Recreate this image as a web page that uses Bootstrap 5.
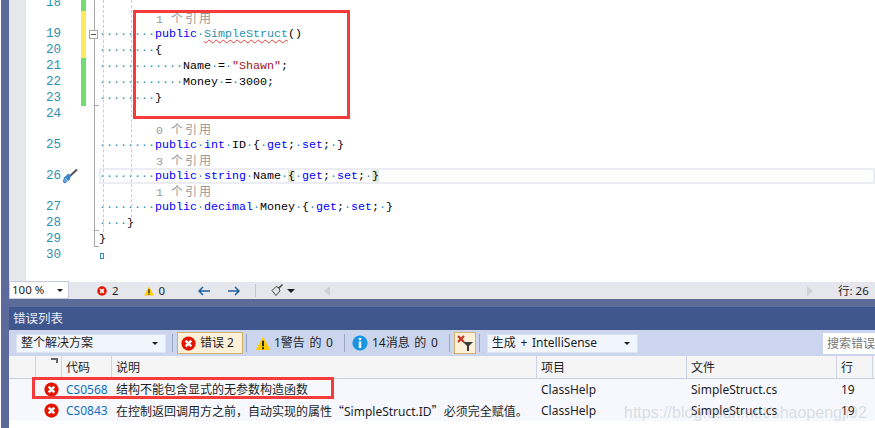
<!DOCTYPE html>
<html lang="zh-Hans">
<head>
<meta charset="utf-8">
<title>错误列表</title>
<link href="https://cdn.jsdelivr.net/npm/bootstrap@5.3.0/dist/css/bootstrap.min.css" rel="stylesheet">
<style>
html,body{margin:0;height:428px;overflow:hidden;background:#fff}
body{font-family:"Noto Sans","Noto Sans CJK SC",sans-serif;font-size:12px;color:#1e1e1e}
.shell{position:relative;width:875px;height:428px;overflow:hidden;padding-left:9px;background:#fff}
.shell::before{content:"";position:absolute;left:1px;top:0;bottom:0;width:8px;background:#5b6a9b}
.editor{position:relative;height:282px;overflow:hidden;background:linear-gradient(90deg,#e6e7e8 0,#e6e7e8 17px,#fff 17px)}
.codelines{margin-top:-5px;font-family:"Liberation Mono","Noto Sans CJK SC",monospace;font-size:11.67px;color:#000}
.ln{display:flex;height:16px;line-height:16px;white-space:pre}
.ln.lens{height:15px;line-height:14px;color:#999}
.num{width:52px;text-align:right;color:#2b91af;font-size:12.5px}
.bar{width:5px;margin-left:20px;flex:none}
.bar.g{background:#6fdc74}.bar.y{background:#fee95f}
.code{margin-left:13px;flex:1}
.lens .code{padding-left:1px}
.ws{color:#2b91af}
.kw{color:#00f}.ty{color:#2b91af}.str{color:#a31515}
.cjk{font-family:"Noto Sans CJK SC",sans-serif;font-size:12px;letter-spacing:2px;margin-left:1px;color:#999}
.squig{text-decoration:underline wavy #f03a3a 1px;text-underline-offset:2px}
.brk{background:#e2e6d6}
.caretline{position:relative}
.caretline::after{content:"";position:absolute;left:90px;right:0;top:0;bottom:0;border:2px solid #ecedf4;pointer-events:none}
.brushico{position:absolute;left:53px;top:0}
.foldline{position:absolute;left:85px;top:0;width:1px;height:246px;background:#a9a9a9}
.tick{position:absolute;left:85px;width:5px;height:1px;background:#a9a9a9}
.t1{top:105px}.t2{top:230px}.t3{top:246px}
.foldbox{position:absolute;left:80px;top:30px;width:9px;height:9px;border:1px solid #a5a5a5;background:#fff}
.foldbox::after{content:"";position:absolute;left:1px;right:1px;top:3px;height:1px;background:#555}
.guide{position:absolute;top:0;width:0;border-left:1px dashed #ccc}
.gd1{left:94px;height:232px}.gd2{left:122px;height:222px}
.endmark{position:absolute;left:91px;top:253px;width:4px;height:6px;border:1px solid #2b91af}
.redbox{position:absolute;border:3px solid #f73a3a;pointer-events:none}
.rb1{left:133px;top:10px;width:217px;height:109px}
.rb2{left:32px;top:377px;width:302px;height:22px}
.statusbar{height:17px;background:#e6e7ec;display:flex;align-items:center;font-size:11.5px;position:relative}
.zoomsel{width:60px;height:18px;margin-top:-1px;background:#fff;border:1px solid #c3cbdc;display:flex;align-items:center;justify-content:space-between;padding:0 5px 0 2px}
.caretdn{width:0;height:0;border-left:3px solid transparent;border-right:3px solid transparent;border-top:3px solid #1e1e1e;flex:none}
.s1{margin-left:28px}.s2{margin-left:5px}.s3{margin-left:25px}.s4{margin-left:33px}.s5{margin-left:18px}
.vsep{width:1px;height:13px;background:#c4c4cc;margin-left:15px}
.s6{margin-left:15px}.s7{margin-left:4px;border-left-width:4px;border-right-width:4px;border-top-width:4px}
.trl{margin-left:29px;width:0;height:0;border-top:5px solid transparent;border-bottom:5px solid transparent;border-right:6px solid #d0d0d6}
.trr{margin-left:477px;width:0;height:0;border-top:5px solid transparent;border-bottom:5px solid transparent;border-left:6px solid #d0d0d6}
.rowpos{margin-left:auto;padding:0 7px 0 0;width:37px;white-space:nowrap}
.bluebar{height:8px;background:#5d6b98}
.titlebar{height:23px;background:#3f578c;color:#e8ecf6;font-size:12.5px;line-height:23px;padding-left:4px}
.toolbar{height:26px;background:#cbd5ee;display:flex;align-items:center;padding-left:7px;white-space:nowrap;word-spacing:1.5px}
.combo{height:19px;background:#f1f5fd;border:1px solid #dce3f3;display:flex;align-items:center;justify-content:space-between;padding:0 7px 0 4px}
.w1{width:150px}.w2{width:151px;margin-left:7px}
.tsep{width:1px;height:18px;background:#98a6c4;flex:none}
.sp1{margin:0 4px 0 6px}.sp2{margin:0 0 0 3px}.sp3{margin:0 0 0 11px}.sp4{margin:0 4px 0 11px}.sp5{margin:0 0 0 3px}
.btn.errbtn{--bs-btn-padding-x:0;--bs-btn-padding-y:0;--bs-btn-border-radius:0;--bs-btn-font-size:12px;height:22px;width:66px;background:#fdf0d8;border:1px solid #d6b06c;display:flex;align-items:center;gap:4px;padding-left:3px;color:#1e1e1e}
.btn.filtbtn{--bs-btn-padding-x:0;--bs-btn-padding-y:0;--bs-btn-border-radius:0;height:22px;width:22px;background:#fdf0d8;border:1px solid #d6b06c;display:flex;align-items:center;justify-content:center}
.tbw{display:flex;align-items:center;gap:3px;margin-left:8px}
.tbi{display:flex;align-items:center;gap:4px;margin-left:7px}
.searchbox{margin-left:auto;width:52px;height:21px;background:#fff;color:#777;line-height:21px;padding-left:4px;overflow:hidden}
.errtable{table-layout:fixed;width:866px;margin:0;font-size:12px;--bs-table-bg:transparent;border-collapse:separate;border-spacing:0}
.errtable th,.errtable td{padding:0 0 0 4px;border:0;font-weight:400;white-space:nowrap;overflow:hidden;vertical-align:middle;color:#1e1e1e}
.errtable thead th{height:23px;padding-top:1px;background:#f5f5f5;border-right:1px solid #cdd3e4;border-bottom:1px solid #c9cfe4}
.errtable tbody td{height:21px;padding-top:1px;background:#f6f8fe}
.errtable td.codelink{color:#0e70c0}
.errtable .ico{padding:0 3px 0 0}
.errtable .hdsort{position:relative}
.sorter{position:absolute;right:3px;top:2px}
.cq{font-family:"Noto Sans CJK SC",sans-serif}
.wm{position:absolute;left:624px;top:401px;font-family:"Liberation Sans",sans-serif;font-size:16px;color:rgba(170,170,175,.36);white-space:nowrap;pointer-events:none}
</style>
</head>
<body>
<svg width="0" height="0" class="position-absolute">
  <symbol id="err" viewBox="0 0 16 16"><circle cx="8" cy="8" r="7.6" fill="#e51400"/><path d="M5 5l6 6M11 5l-6 6" stroke="#fff" stroke-width="2.6"/></symbol>
  <symbol id="warn" viewBox="0 0 16 16"><path d="M8 .8L15.8 15H.2z" fill="#fc0"/><path d="M8 5v6M8 12v2" stroke="#1e1e1e" stroke-width="2"/></symbol>
  <symbol id="info" viewBox="0 0 16 16"><circle cx="8" cy="8" r="7.6" fill="#1a94e0"/><path d="M8 3v2.2M8 6.5V13" stroke="#fff" stroke-width="2.4"/></symbol>
  <symbol id="brush" viewBox="0 0 16 16"><path d="M15 1.5L8 8" stroke="#555" stroke-width="2"/><path d="M9 8L6.500 5.500 2 9.500 .8 14 3 15.500 7.500 12z" fill="#3a86c8"/><path d="M3 10l3 3M2.500 12l2 2" stroke="#d5e8f8" stroke-width=".9"/></symbol>
</svg>
<div class="shell">
  <div class="editor">
    <div class="codelines">
      <div class="ln"><div class="num">18</div><div class="bar g"></div><div class="code"></div></div>
      <div class="ln lens"><div class="num"></div><div class="bar y"></div><div class="code">        1 <span class="cjk">个引用</span></div></div>
      <div class="ln"><div class="num">19</div><div class="bar y"></div><div class="code"><span class="ws">········</span><span class="kw">public</span><span class="ws">·</span><span class="ty squig">SimpleStruct</span>()</div></div>
      <div class="ln"><div class="num">20</div><div class="bar y"></div><div class="code"><span class="ws">········</span>{</div></div>
      <div class="ln"><div class="num">21</div><div class="bar g"></div><div class="code"><span class="ws">············</span>Name<span class="ws">·</span>=<span class="ws">·</span><span class="str">"Shawn"</span>;</div></div>
      <div class="ln"><div class="num">22</div><div class="bar g"></div><div class="code"><span class="ws">············</span>Money<span class="ws">·</span>=<span class="ws">·</span>3000;</div></div>
      <div class="ln"><div class="num">23</div><div class="bar g"></div><div class="code"><span class="ws">········</span>}</div></div>
      <div class="ln"><div class="num">24</div><div class="bar"></div><div class="code"></div></div>
      <div class="ln lens"><div class="num"></div><div class="bar"></div><div class="code">        0 <span class="cjk">个引用</span></div></div>
      <div class="ln"><div class="num">25</div><div class="bar"></div><div class="code"><span class="ws">········</span><span class="kw">public</span><span class="ws">·</span><span class="kw">int</span><span class="ws">·</span>ID<span class="ws">·</span>{<span class="ws">·</span><span class="kw">get</span>;<span class="ws">·</span><span class="kw">set</span>;<span class="ws">·</span>}</div></div>
      <div class="ln lens"><div class="num"></div><div class="bar"></div><div class="code">        3 <span class="cjk">个引用</span></div></div>
      <div class="ln caretline"><div class="num">26</div><svg class="brushico" width="16" height="16"><use href="#brush"/></svg><div class="bar"></div><div class="code"><span class="ws">········</span><span class="kw">public</span><span class="ws">·</span><span class="kw">string</span><span class="ws">·</span>Name<span class="ws">·</span><span class="brk">{</span><span class="ws">·</span><span class="kw">get</span>;<span class="ws">·</span><span class="kw">set</span>;<span class="ws">·</span><span class="brk">}</span></div></div>
      <div class="ln lens"><div class="num"></div><div class="bar"></div><div class="code">        1 <span class="cjk">个引用</span></div></div>
      <div class="ln"><div class="num">27</div><div class="bar"></div><div class="code"><span class="ws">········</span><span class="kw">public</span><span class="ws">·</span><span class="kw">decimal</span><span class="ws">·</span>Money<span class="ws">·</span>{<span class="ws">·</span><span class="kw">get</span>;<span class="ws">·</span><span class="kw">set</span>;<span class="ws">·</span>}</div></div>
      <div class="ln"><div class="num">28</div><div class="bar"></div><div class="code"><span class="ws">····</span>}</div></div>
      <div class="ln"><div class="num">29</div><div class="bar"></div><div class="code">}</div></div>
      <div class="ln"><div class="num">30</div><div class="bar"></div><div class="code"></div></div>
    </div>
    <div class="foldline"></div>
    <div class="tick t1"></div>
    <div class="tick t2"></div>
    <div class="tick t3"></div>
    <div class="foldbox"></div>
    <div class="guide gd1"></div>
    <div class="guide gd2"></div>
    <div class="endmark"></div>
  </div>
  <div class="statusbar">
    <div class="zoomsel"><span>100 %</span><i class="caretdn"></i></div>
    <svg class="s1" width="10" height="10"><use href="#err"/></svg><span class="s2">2</span>
    <svg class="s3" width="10" height="10"><use href="#warn"/></svg><span class="s2">0</span>
    <svg class="s4" width="12" height="10" viewBox="0 0 12 10"><path d="M12 5H1M5 1L1 5l4 4" fill="none" stroke="#1c5f9f" stroke-width="1.5"/></svg>
    <svg class="s5" width="12" height="10" viewBox="0 0 12 10"><path d="M0 5h11M7 1l4 4-4 4" fill="none" stroke="#1c5f9f" stroke-width="1.5"/></svg>
    <div class="vsep"></div>
    <svg class="s6" width="12" height="13" viewBox="0 0 12 13"><path d="M11.500 .5L7.500 4.500" stroke="#444" stroke-width="1.500"/><path d="M8 4L5 2.500 1 6.500 5 11.500 9 7z" fill="#e4e4e8" stroke="#444"/></svg>
    <i class="caretdn s7"></i>
    <i class="trl"></i>
    <i class="trr"></i>
    <div class="rowpos">行: 26</div>
  </div>
  <div class="bluebar"></div>
  <div class="titlebar">错误列表</div>
  <div class="toolbar">
    <div class="combo w1"><span>整个解决方案</span><i class="caretdn"></i></div>
    <div class="tsep sp1"></div>
    <button type="button" class="btn errbtn"><svg width="15" height="15"><use href="#err"/></svg><span>错误 2</span></button>
    <div class="tsep sp2"></div>
    <div class="tbw"><svg width="16" height="15"><use href="#warn"/></svg><span>1警告 的 0</span></div>
    <div class="tsep sp3"></div>
    <div class="tbi"><svg width="16" height="16"><use href="#info"/></svg><span>14消息 的 0</span></div>
    <div class="tsep sp4"></div>
    <button type="button" class="btn filtbtn"><svg width="18" height="18" viewBox="0 0 18 18"><path d="M2 2l6 6M8 2L2 8" stroke="#c4341c" stroke-width="2.200"/><path d="M7 8h10l-4 4v5h-2v-5z" fill="#3c3c3c"/></svg></button>
    <div class="tsep sp5"></div>
    <div class="combo w2"><span>生成 + IntelliSense</span><i class="caretdn"></i></div>
    <div class="searchbox">搜索错误列表</div>
  </div>
  <table class="table errtable">
    <colgroup><col style="width:27px"><col style="width:26px"><col style="width:50px"><col style="width:425px"><col style="width:150px"><col style="width:150px"><col style="width:36px"><col></colgroup>
    <thead><tr><th></th><th class="hdsort"><svg class="sorter" width="7" height="5" viewBox="0 0 7 5"><path d="M0 0h7v5h-2V2H0z" fill="#666"/></svg></th><th>代码</th><th>说明</th><th>项目</th><th>文件</th><th>行</th><th class="border-end-0"></th></tr></thead>
    <tbody>
      <tr><td></td><td class="ico"><svg width="15" height="15" class="d-block ms-auto"><use href="#err"/></svg></td><td class="codelink">CS0568</td><td>结构不能包含显式的无参数构造函数</td><td>ClassHelp</td><td>SimpleStruct.cs</td><td>19</td><td></td></tr>
      <tr><td></td><td class="ico"><svg width="15" height="15" class="d-block ms-auto"><use href="#err"/></svg></td><td class="codelink">CS0843</td><td>在控制返回调用方之前，自动实现的属性<span class="cq">“</span>SimpleStruct.ID<span class="cq">”</span>必须完全赋值。</td><td>ClassHelp</td><td>SimpleStruct.cs</td><td>19</td><td></td></tr>
    </tbody>
  </table>
  <div class="redbox rb1"></div>
  <div class="redbox rb2"></div>
  <div class="wm">https://blog.csdn.net/shaopengji92</div>
</div>
</body>
</html>
